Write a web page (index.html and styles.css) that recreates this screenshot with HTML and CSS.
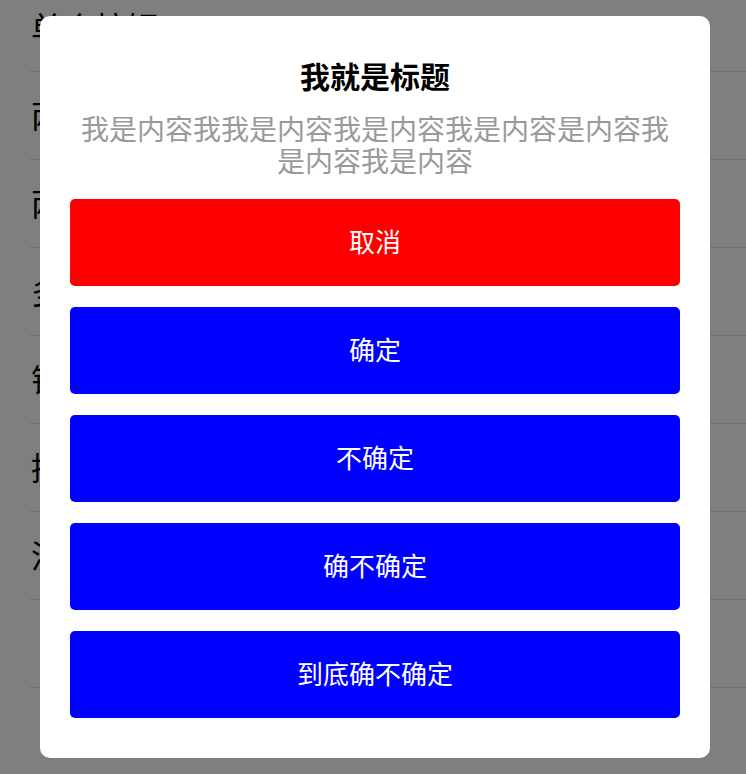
FILE: index.html
```html
<!DOCTYPE html>
<html lang="zh-CN">
<head>
<meta charset="utf-8">
<title>Dialog</title>
<link rel="stylesheet" href="styles.css">
</head>
<body>
<ul class="list">
  <li class="row">单个按钮</li>
  <li class="row">两个按钮</li>
  <li class="row">两个按钮竖排</li>
  <li class="row">多个按钮</li>
  <li class="row">错误提示</li>
  <li class="row">提示框</li>
  <li class="row">没有标题</li>
  <li class="row"></li>
</ul>
<div class="mask">
  <div class="dialog">
    <h1 class="title">我就是标题</h1>
    <p class="content">我是内容我我是内容我是内容我是内容是内容我是内容我是内容</p>
    <div class="actions">
      <button class="btn btn-cancel">取消</button>
      <button class="btn btn-ok">确定</button>
      <button class="btn btn-ok">不确定</button>
      <button class="btn btn-ok">确不确定</button>
      <button class="btn btn-ok">到底确不确定</button>
    </div>
  </div>
</div>
</body>
</html>
```
FILE: styles.css
```css
html, body {
  margin: 0;
  padding: 0;
  background: #fff;
  font-family: "Noto Sans CJK SC", "Noto Sans", sans-serif;
  overflow: hidden;
}
.list {
  list-style: none;
  margin: -16px 0 0 0;
  padding: 0;
}
.row {
  box-sizing: border-box;
  margin-left: 30px;
  height: 88px;
  border-bottom: 1px solid #e0e0e0;
  display: flex;
  align-items: center;
  font-size: 32px;
  color: #000;
  padding: 0 0 3px 1px;
}
.mask {
  position: fixed;
  inset: 0;
  background: rgba(0, 0, 0, 0.5);
  display: flex;
  align-items: center;
}
.dialog {
  margin-left: 40px;
  width: 670px;
  box-sizing: border-box;
  background: #fff;
  border-radius: 10px;
  padding: 38px 30px 40px;
  display: flex;
  flex-direction: column;
}
.title {
  margin: 0;
  font-size: 30px;
  line-height: 42px;
  font-weight: bold;
  color: #000;
  text-align: center;
}
.content {
  margin: 16px 0 0;
  font-size: 28px;
  line-height: 32px;
  color: #999;
  text-align: center;
}
.actions {
  margin-top: 23px;
  display: flex;
  flex-direction: column;
  gap: 21px;
}
.btn {
  height: 87px;
  border: none;
  border-radius: 5px;
  font-family: inherit;
  font-size: 26px;
  color: #fff;
  padding: 0 0 5px;
}
.btn-cancel { background: #ff0000; }
.btn-ok { background: #0000ff; }
```
